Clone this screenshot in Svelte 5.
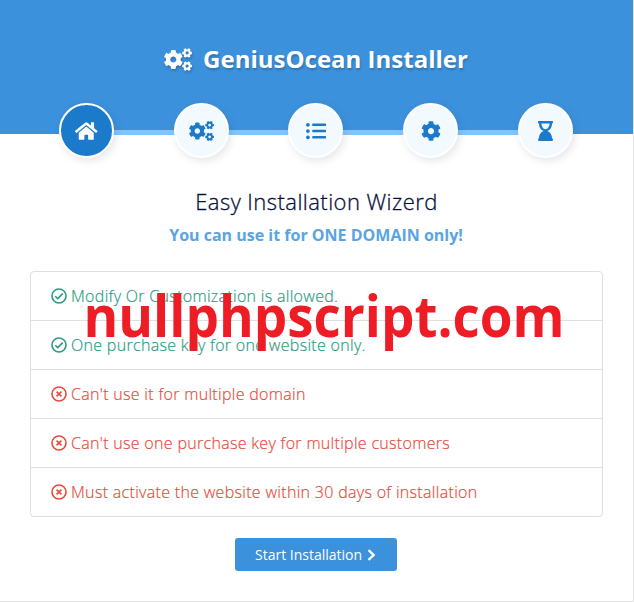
<script>
  const cog = 'M487.4 315.7l-42.6-24.6c4.3-23.2 4.3-47 0-70.2l42.6-24.6c4.9-2.8 7.1-8.6 5.5-14-11.1-35.6-30-67.8-54.7-94.6-3.8-4.1-10-5.1-14.8-2.3L380.8 110c-17.9-15.4-38.5-27.3-60.8-35.1V25.8c0-5.6-3.9-10.5-9.4-11.7-36.7-8.2-74.3-7.8-109.2 0-5.5 1.2-9.4 6.1-9.4 11.7V75c-22.2 7.9-42.8 19.8-60.8 35.1L88.7 85.5c-4.9-2.8-11-1.9-14.8 2.3-24.7 26.7-43.6 58.9-54.7 94.6-1.7 5.4.6 11.2 5.5 14L67.3 221c-4.3 23.2-4.3 47 0 70.2l-42.6 24.6c-4.9 2.8-7.1 8.6-5.5 14 11.1 35.6 30 67.8 54.7 94.6 3.8 4.1 10 5.1 14.8 2.3l42.6-24.6c17.9 15.4 38.5 27.3 60.8 35.1v49.2c0 5.6 3.9 10.5 9.4 11.7 36.7 8.2 74.3 7.8 109.2 0 5.5-1.2 9.4-6.1 9.4-11.7v-49.2c22.2-7.9 42.8-19.8 60.8-35.1l42.6 24.6c4.9 2.8 11 1.9 14.8-2.3 24.7-26.7 43.6-58.9 54.7-94.6 1.5-5.5-.7-11.3-5.6-14.1zM256 336c-44.1 0-80-35.9-80-80s35.9-80 80-80 80 35.9 80 80-35.9 80-80 80z';
  const home = 'M280.37 148.26L96 300.11V464a16 16 0 0 0 16 16l112.06-.29a16 16 0 0 0 15.92-16V368a16 16 0 0 1 16-16h64a16 16 0 0 1 16 16v95.64a16 16 0 0 0 16 16.05L464 480a16 16 0 0 0 16-16V300L295.67 148.26a12.19 12.19 0 0 0-15.3 0zM571.6 251.47L488 182.56V44.05a12 12 0 0 0-12-12h-56a12 12 0 0 0-12 12v72.61L318.47 43a48 48 0 0 0-61 0L4.34 251.47a12 12 0 0 0-1.6 16.9l25.5 31A12 12 0 0 0 45.15 301l235.22-193.74a12.19 12.19 0 0 1 15.3 0L530.9 301a12 12 0 0 0 16.9-1.6l25.5-31a12 12 0 0 0-1.7-16.93z';
  const hourglass = 'M360 64c13.255 0 24-10.745 24-24V24c0-13.255-10.745-24-24-24H24C10.745 0 0 10.745 0 24v16c0 13.255 10.745 24 24 24 0 90.965 51.016 167.734 120.842 192C75.016 280.266 24 357.035 24 448c-13.255 0-24 10.745-24 24v16c0 13.255 10.745 24 24 24h336c13.255 0 24-10.745 24-24v-16c0-13.255-10.745-24-24-24 0-90.965-51.016-167.734-120.842-192C308.984 231.734 360 154.965 360 64zM192 208c-57.787 0-104-66.518-104-144h208c0 77.945-46.51 144-104 144z';
  const steps = ['home', 'cogs', 'list', 'cog', 'hourglass'];
  const rules = [
    { ok: true, text: 'Modify Or Customization is allowed.' },
    { ok: true, text: 'One purchase key for one website only.' },
    { ok: false, text: "Can't use it for multiple domain" },
    { ok: false, text: "Can't use one purchase key for multiple customers" },
    { ok: false, text: 'Must activate the website within 30 days of installation' }
  ];
</script>

{#snippet cogs()}
  <svg class="cogs" viewBox="0 0 640 512">
    <path d={cog} transform="translate(213 256) scale(.88) translate(-256 -256)" />
    <path d={cog} transform="translate(528 106) rotate(30) scale(.45) translate(-256 -256)" />
    <path d={cog} transform="translate(528 406) rotate(30) scale(.45) translate(-256 -256)" />
  </svg>
{/snippet}

<div class="installer">
  <header>
    <h1>{@render cogs()}<span>GeniusOcean Installer</span></h1>
  </header>
  <nav>
    {#each steps as step, i}
      <div class="step" class:active={i === 0}>
        {#if step === 'home'}
          <svg class="home" viewBox="0 0 576 512"><path d={home} /></svg>
        {:else if step === 'cogs'}
          {@render cogs()}
        {:else if step === 'list'}
          <svg viewBox="0 0 512 512">
            <circle cx="48" cy="96" r="48" /><circle cx="48" cy="256" r="48" /><circle cx="48" cy="416" r="48" />
            <rect x="160" y="64" width="352" height="64" rx="16" /><rect x="160" y="224" width="352" height="64" rx="16" /><rect x="160" y="384" width="352" height="64" rx="16" />
          </svg>
        {:else if step === 'cog'}
          <svg viewBox="0 0 512 512"><path d={cog} /></svg>
        {:else}
          <svg class="hourglass" viewBox="0 0 384 512"><path d={hourglass} /></svg>
        {/if}
      </div>
    {/each}
  </nav>
  <main>
    <h2>Easy Installation Wizerd</h2>
    <p>You can use it for ONE DOMAIN only!</p>
    <ul>
      {#each rules as rule}
        <li class:ok={rule.ok}>
          <svg viewBox="0 0 512 512">
            <circle cx="256" cy="256" r="224" />
            {#if rule.ok}
              <path d="M136 263L215 339L376 180" />
            {:else}
              <path d="M178 178L334 334M334 178L178 334" />
            {/if}
          </svg>
          <span>{rule.text}</span>
        </li>
      {/each}
    </ul>
    <button>Start Installation
      <svg viewBox="0 0 9 12"><path d="M1.5 1.2L6.6 6L1.5 10.8" /></svg>
    </button>
  </main>
  <svg class="watermark" width="633" height="100">
    <text x="83.5" y="68" textLength="481" lengthAdjust="spacingAndGlyphs">nullphpscript.com</text>
  </svg>
</div>

<style>
  :global(body) { background: #fff; }
  .installer {
    position: relative;
    box-sizing: border-box;
    width: 634px;
    height: 602px;
    border-right: 1px solid #e2e2e2;
    border-bottom: 1px solid #e2e2e2;
    font-family: 'Open Sans', sans-serif;
  }
  header {
    height: 134px;
    box-sizing: border-box;
    padding-top: 41px;
    background: #3c91dc;
  }
  h1 {
    margin: 0 1px 0 0;
    display: flex;
    align-items: center;
    justify-content: center;
    gap: 11px;
    height: 34px;
    font-size: 24px;
    font-weight: 700;
    color: #fff;
    text-shadow: 1px 2px 2px rgba(0, 0, 0, .2);
    white-space: nowrap;
  }
  h1 .cogs {
    width: 28px;
    height: 23px;
    margin-top: 2px;
    fill: #fff;
    filter: drop-shadow(1px 2px 1px rgba(0, 0, 0, .2));
  }
  nav {
    display: flex;
    justify-content: space-between;
    align-items: center;
    width: 514px;
    height: 55px;
    margin: -31px 0 0 58.8px;
    background: linear-gradient(#80c4ff, #80c4ff) 0 27px / 100% 5px no-repeat;
  }
  .step {
    display: flex;
    align-items: center;
    justify-content: center;
    box-sizing: border-box;
    width: 55px;
    height: 55px;
    border: 2px solid #fff;
    border-radius: 50%;
    background: #f2faff;
    box-shadow: 2px 3px 8px rgba(0, 0, 0, .1);
  }
  .step svg { width: 20px; height: 20px; fill: #1c7acb; }
  .step .cogs { width: 25px; }
  .step .home { width: 22.5px; }
  .step .hourglass { width: 15px; }
  .active { background: #1c7acb; }
  .step.active svg { fill: #fff; }
  main {
    display: flex;
    flex-direction: column;
    align-items: center;
    padding: 28px 30px 0;
  }
  h2 {
    margin: 0;
    font-size: 22px;
    line-height: 30px;
    font-weight: 300;
    letter-spacing: .45px;
    -webkit-text-stroke: .3px currentColor;
    color: #07103b;
  }
  p {
    margin: 7px 1px 24px 0;
    font-size: 16px;
    line-height: 24px;
    font-weight: 700;
    color: #5ba4e3;
  }
  ul {
    box-sizing: border-box;
    width: 573px;
    margin: 0;
    padding: 0;
    list-style: none;
    border: 1px solid #dfdfdf;
    border-radius: 4px;
  }
  li {
    display: flex;
    align-items: center;
    gap: 4.5px;
    height: 48px;
    padding-left: 19.5px;
    font-size: 16px;
    font-weight: 300;
    letter-spacing: .31px;
    color: #e74c3c;
    --c: #e74c3c;
  }
  li span { -webkit-text-stroke: .2px currentColor; }
  li + li { border-top: 1px solid #dfdfdf; }
  li.ok { color: #2b9c7f; --c: #2b9c7f; }
  li svg { width: 16px; height: 16px; fill: none; stroke: var(--c); stroke-width: 52; }
  button {
    display: flex;
    align-items: center;
    gap: 5px;
    width: 162px;
    height: 33px;
    margin: 21px 1px 0 0;
    padding: 0 20px;
    border: 0;
    border-radius: 3px;
    background: #3c91dc;
    color: #fff;
    font: 400 14px 'Open Sans', sans-serif;
    white-space: nowrap;
  }
  button svg { width: 9px; height: 12px; fill: none; stroke: #fff; stroke-width: 2.4; }
  .watermark { position: absolute; left: 0; top: 269px; }
  .watermark text { font-size: 57px; font-weight: 700; fill: #ee1c25; }
</style>
